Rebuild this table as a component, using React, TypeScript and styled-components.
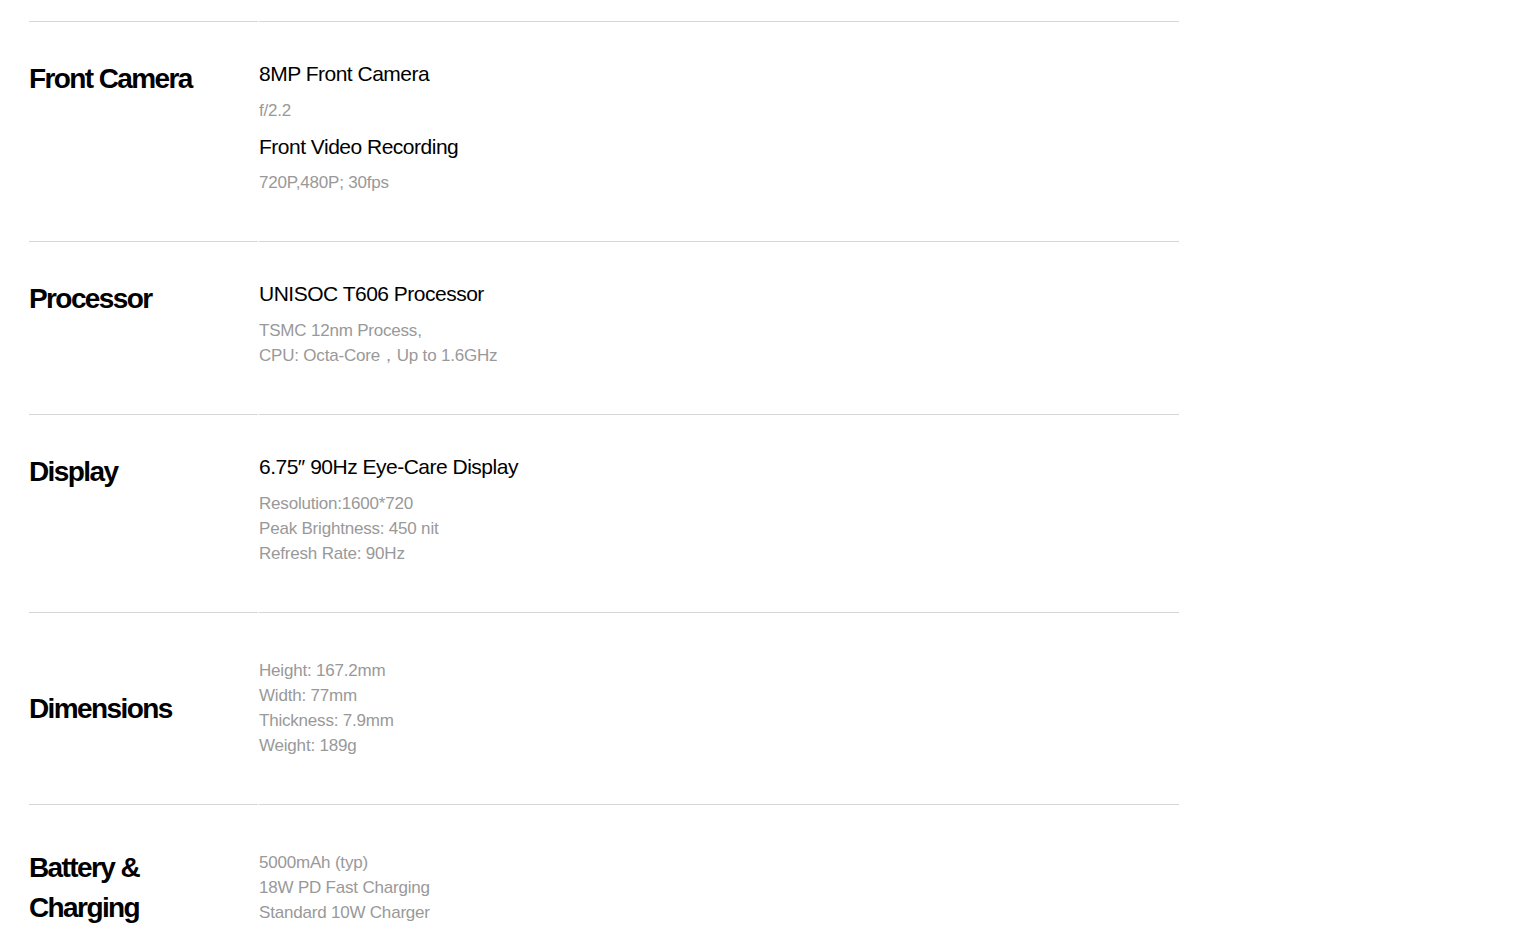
import styled, { createGlobalStyle } from 'styled-components';

const GlobalStyle = createGlobalStyle`
  html, body {
    margin: 0;
    padding: 0;
    background: #fff;
  }
  body {
    font-family: 'Liberation Sans', Arial, sans-serif;
    color: #000;
  }
`;

interface SpecBlock {
  title?: string;
  lines: string[];
}

interface Spec {
  label: string[];
  blocks: SpecBlock[];
  centered?: boolean;
}

const specs: Spec[] = [
  {
    label: ['Front Camera'],
    blocks: [
      { title: '8MP Front Camera', lines: ['f/2.2'] },
      { title: 'Front Video Recording', lines: ['720P,480P; 30fps'] },
    ],
  },
  {
    label: ['Processor'],
    blocks: [
      {
        title: 'UNISOC T606 Processor',
        lines: ['TSMC 12nm Process,', 'CPU: Octa-Core，Up to 1.6GHz'],
      },
    ],
  },
  {
    label: ['Display'],
    blocks: [
      {
        title: '6.75″ 90Hz Eye-Care Display',
        lines: ['Resolution:1600*720', 'Peak Brightness: 450 nit', 'Refresh Rate: 90Hz'],
      },
    ],
  },
  {
    label: ['Dimensions'],
    centered: true,
    blocks: [
      {
        lines: ['Height: 167.2mm', 'Width: 77mm', 'Thickness: 7.9mm', 'Weight: 189g'],
      },
    ],
  },
  {
    label: ['Battery &', 'Charging'],
    centered: true,
    blocks: [
      {
        lines: ['5000mAh (typ)', '18W PD Fast Charging', 'Standard 10W Charger'],
      },
    ],
  },
];

const Page = styled.main`
  padding: 21px 0 0 29px;
`;

const SpecTable = styled.section`
  width: 1150px;
  display: grid;
  grid-template-columns: 229px 920px;
  column-gap: 1px;
`;

const LabelCell = styled.div<{ $centered?: boolean }>`
  border-top: 1px solid #d6d6d6;
  display: flex;
  align-items: ${({ $centered }) => ($centered ? 'center' : 'flex-start')};
  padding-top: ${({ $centered }) => ($centered ? '0' : '37px')};
`;

const Label = styled.h3`
  margin: 0;
  font-size: 28px;
  line-height: 40px;
  font-weight: 700;
  letter-spacing: -1.6px;
  color: #000;
`;

const ContentCell = styled.div`
  border-top: 1px solid #d6d6d6;
  padding: 45px 0 46px;
  display: flex;
  flex-direction: column;
`;

const Title = styled.h4`
  margin: 11px 0 10px;
  font-size: 21px;
  line-height: 26px;
  font-weight: 400;
  letter-spacing: -0.5px;
  color: #000;

  &:first-child {
    margin-top: -6px;
    margin-bottom: 11px;
  }
`;

const Detail = styled.p`
  margin: 0;
  font-size: 17px;
  line-height: 25px;
  letter-spacing: -0.2px;
  color: #999;
`;

export default function App() {
  return (
    <Page>
      <GlobalStyle />
      <SpecTable>
        {specs.map((spec) => (
          <SpecRow key={spec.label.join(' ')} spec={spec} />
        ))}
      </SpecTable>
    </Page>
  );
}

function SpecRow({ spec }: { spec: Spec }) {
  return (
    <>
      <LabelCell $centered={spec.centered}>
        <Label>
          {spec.label.map((part, i) => (
            <span key={part}>
              {i > 0 && <br />}
              {part}
            </span>
          ))}
        </Label>
      </LabelCell>
      <ContentCell>
        {spec.blocks.map((block) => [
          block.title && <Title key={block.title}>{block.title}</Title>,
          ...block.lines.map((line) => <Detail key={line}>{line}</Detail>),
        ])}
      </ContentCell>
    </>
  );
}
